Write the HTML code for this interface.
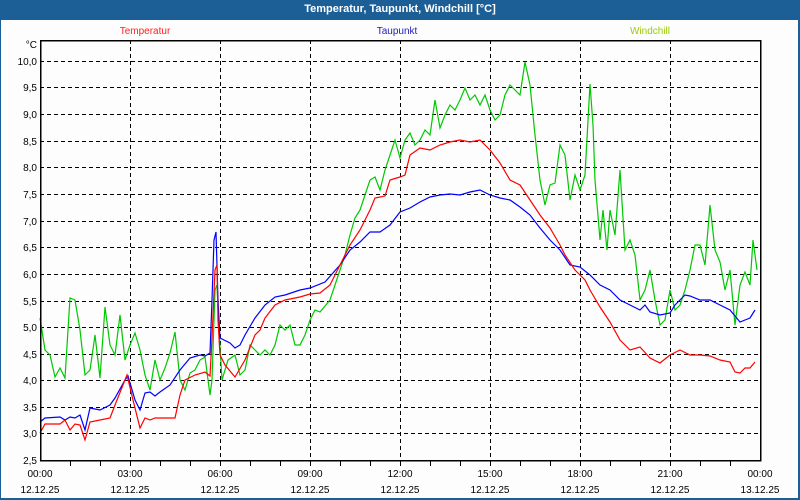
<!DOCTYPE html>
<html><head><meta charset="utf-8"><style>
body{margin:0;width:800px;height:500px;overflow:hidden;background:#1c5f97;font-family:"Liberation Sans",sans-serif}
#w{position:absolute;left:1px;top:20px;width:797px;height:478px;background:#fcfdfc}
#t{position:absolute;left:0;top:0;width:800px;height:20px;line-height:18px;color:#fff;font-weight:bold;font-size:11px;text-align:center}
svg{position:absolute;left:0;top:0}
text{font-family:"Liberation Sans",sans-serif;font-size:10px}
</style></head><body>
<div id="t">Temperatur, Taupunkt, Windchill [°C]</div>
<div id="w"></div>
<svg width="800" height="500">
<g stroke="#000" stroke-width="1" stroke-dasharray="4,3" shape-rendering="crispEdges">
<line x1="130.5" y1="40" x2="130.5" y2="460"/><line x1="220.5" y1="40" x2="220.5" y2="460"/><line x1="310.5" y1="40" x2="310.5" y2="460"/><line x1="400.5" y1="40" x2="400.5" y2="460"/><line x1="490.5" y1="40" x2="490.5" y2="460"/><line x1="580.5" y1="40" x2="580.5" y2="460"/><line x1="670.5" y1="40" x2="670.5" y2="460"/>
<line x1="40" y1="61.5" x2="760" y2="61.5"/><line x1="40" y1="87.5" x2="760" y2="87.5"/><line x1="40" y1="114.5" x2="760" y2="114.5"/><line x1="40" y1="141.5" x2="760" y2="141.5"/><line x1="40" y1="167.5" x2="760" y2="167.5"/><line x1="40" y1="194.5" x2="760" y2="194.5"/><line x1="40" y1="221.5" x2="760" y2="221.5"/><line x1="40" y1="247.5" x2="760" y2="247.5"/><line x1="40" y1="274.5" x2="760" y2="274.5"/><line x1="40" y1="301.5" x2="760" y2="301.5"/><line x1="40" y1="327.5" x2="760" y2="327.5"/><line x1="40" y1="354.5" x2="760" y2="354.5"/><line x1="40" y1="380.5" x2="760" y2="380.5"/><line x1="40" y1="407.5" x2="760" y2="407.5"/><line x1="40" y1="433.5" x2="760" y2="433.5"/>
</g>
<g fill="none" stroke-width="1.2">
<polyline stroke="#00c800" points="40,318 45,350 50,355 55,377 60,368 65,378 70,298 75,300 80,330 85,375 90,370 95,335 100,378 105,307 110,345 115,355 120,315 125,360 130,345 135,333 140,350 145,375 150,390 155,360 160,380 165,368 170,353 175,332 180,380 185,390 190,373 195,370 200,360 205,357 210,395 212,380 215,290 217,285 219,330 222,380 228,360 235,355 240,375 245,370 250,345 255,350 260,355 265,350 270,355 275,345 280,325 285,330 290,325 295,345 300,345 305,335 310,320 315,310 320,312 330,300 335,285 340,270 345,255 350,235 355,218 360,210 365,195 370,180 375,177 380,190 385,170 390,155 395,140 400,158 405,140 410,133 415,145 420,140 425,130 430,135 435,100 440,128 445,115 450,105 455,110 460,100 465,88 470,100 475,95 480,105 485,95 490,110 495,120 500,115 505,95 510,85 515,90 520,95 525,62 530,85 535,135 540,180 545,205 550,185 555,183 560,145 565,155 570,200 575,175 580,190 585,175 590,84 593,125 595,180 600,240 603,210 607,250 610,210 615,235 620,170 625,250 630,240 635,255 640,300 645,290 650,270 655,300 660,325 665,320 670,290 675,310 680,305 685,290 690,270 695,245 700,245 705,265 710,205 715,250 720,262 725,290 730,270 735,325 740,285 745,272 750,285 753,240 757,270"/>
<polyline stroke="#0000ff" points="40,422 45,418 60,417 65,420 70,417 75,418 80,415 85,430 90,408 100,410 110,405 115,398 125,380 128,376 135,400 140,410 145,393 150,392 155,396 160,392 170,385 180,370 190,358 200,355 205,356 210,353 212,300 214,240 216,232 218,300 220,338 230,343 235,348 240,345 245,335 255,318 265,305 275,297 285,295 300,290 310,288 325,282 340,265 350,250 360,242 370,232 380,232 390,225 400,212 410,208 420,202 430,197 440,195 450,194 460,195 470,192 480,190 490,195 500,198 510,200 520,207 530,215 540,228 550,240 555,245 560,250 570,265 580,267 590,275 600,285 610,290 620,300 630,305 640,310 645,305 650,312 660,315 670,313 675,305 685,295 690,296 700,300 710,300 720,305 730,310 740,322 745,320 750,318 755,310"/>
<polyline stroke="#ff0000" points="40,433 45,424 60,424 65,420 70,430 75,424 80,425 85,440 90,422 100,420 110,418 115,405 125,380 127,375 133,400 140,428 145,418 150,420 155,418 175,418 180,395 185,380 195,375 205,372 210,376 212,338 215,270 217,265 218,320 220,355 225,365 235,377 245,360 255,335 260,330 265,318 275,305 285,300 300,297 310,294 320,293 330,285 340,265 350,245 360,230 370,210 375,198 385,196 390,180 400,177 405,175 410,155 420,148 430,150 440,145 450,142 460,140 470,142 480,140 490,150 500,163 510,180 520,185 530,200 540,215 550,228 560,245 565,255 575,270 585,280 590,290 600,307 610,322 620,340 630,350 640,347 650,358 660,363 670,355 680,350 690,355 700,355 710,356 720,360 730,362 735,372 740,373 745,368 750,368 755,362"/>
</g>
<g stroke="#000" shape-rendering="crispEdges">
<rect x="40.5" y="40.5" width="720" height="420" fill="none" stroke-width="1.5"/>
<path d="M70.5 460v6M100.5 460v6M130.5 460v6M160.5 460v6M190.5 460v6M220.5 460v6M250.5 460v6M280.5 460v6M310.5 460v6M340.5 460v6M370.5 460v6M400.5 460v6M430.5 460v6M460.5 460v6M490.5 460v6M520.5 460v6M550.5 460v6M580.5 460v6M610.5 460v6M640.5 460v6M670.5 460v6M700.5 460v6M730.5 460v6"/>
</g>
<g text-anchor="end" fill="#000">
<text x="37" y="48">°C</text><text x="37" y="65">10,0</text><text x="37" y="91">9,5</text><text x="37" y="118">9,0</text><text x="37" y="145">8,5</text><text x="37" y="171">8,0</text><text x="37" y="198">7,5</text><text x="37" y="225">7,0</text><text x="37" y="251">6,5</text><text x="37" y="278">6,0</text><text x="37" y="305">5,5</text><text x="37" y="331">5,0</text><text x="37" y="358">4,5</text><text x="37" y="384">4,0</text><text x="37" y="411">3,5</text><text x="37" y="437">3,0</text><text x="37" y="464">2,5</text>
</g>
<g text-anchor="middle" fill="#000">
<text x="40" y="477">00:00</text><text x="130" y="477">03:00</text><text x="220" y="477">06:00</text><text x="310" y="477">09:00</text><text x="400" y="477">12:00</text><text x="490" y="477">15:00</text><text x="580" y="477">18:00</text><text x="670" y="477">21:00</text><text x="760" y="477">00:00</text>
<text x="40" y="493">12.12.25</text><text x="130" y="493">12.12.25</text><text x="220" y="493">12.12.25</text><text x="310" y="493">12.12.25</text><text x="400" y="493">12.12.25</text><text x="490" y="493">12.12.25</text><text x="580" y="493">12.12.25</text><text x="670" y="493">12.12.25</text><text x="760" y="493">13.12.25</text>
<text x="145" y="34" fill="#ff2020">Temperatur</text><text x="397" y="34" fill="#2020c0">Taupunkt</text><text x="650" y="34" fill="#9acd00">Windchill</text>
</g>
</svg>
</body></html>
